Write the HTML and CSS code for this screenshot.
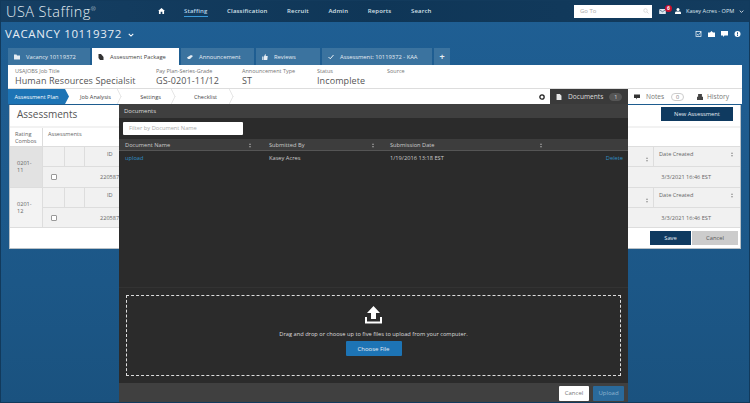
FILE: index.html
```html
<!DOCTYPE html>
<html>
<head>
  <meta charset="utf-8">
  <link rel="stylesheet" href="styles.css">
</head>
<body>
  <div class="topbar">
    <div class="logo">USA Staffing<sup>®</sup></div>
    <div class="nav">
      <svg class="nav-home" viewBox="0 0 16 14"><path d="M8 0 L16 7 L14 7 L14 14 L10 14 L10 9 L6 9 L6 14 L2 14 L2 7 L0 7 Z" fill="#fff"/></svg>
      <span class="nav-item active">Staffing</span>
      <span class="nav-item">Classification</span>
      <span class="nav-item">Recruit</span>
      <span class="nav-item">Admin</span>
      <span class="nav-item">Reports</span>
      <span class="nav-item">Search</span>
    </div>
    <div class="goto">
      <span>Go To</span>
      <svg viewBox="0 0 12 12"><circle cx="5" cy="5" r="3.5" fill="none" stroke="#ccc" stroke-width="1.3"/><path d="M8 8 L11 11" stroke="#ccc" stroke-width="1.5"/></svg>
    </div>
    <div class="mail">
      <svg viewBox="0 0 12 9"><rect width="12" height="9" rx="1" fill="#dfe7ee"/><path d="M0 1 L6 5 L12 1" fill="none" stroke="#123a5c"/></svg>
      <span class="mail-badge">6</span>
    </div>
    <div class="user">
      <svg viewBox="0 0 12 12"><circle cx="6" cy="3.2" r="3" fill="#fff"/><path d="M0 12 V9.5 Q0 7 3 7 H9 Q12 7 12 9.5 V12 Z" fill="#fff"/></svg>
      <span>Kasey Acres - OPM</span>
      <svg class="chev" viewBox="0 0 8 5"><path d="M1 1 L4 4 L7 1" fill="none" stroke="#fff" stroke-width="1.3"/></svg>
    </div>
  </div>

  <div class="vacancy-row">
    <div class="vacancy-title">VACANCY 10119372
      <svg viewBox="0 0 8 5"><path d="M1 1 L4 4 L7 1" fill="none" stroke="#fff" stroke-width="1.4"/></svg>
    </div>
    <div class="vacancy-icons">
      <svg viewBox="0 0 12 12"><rect x="1" y="1" width="10" height="10" fill="none" stroke="#fff" stroke-width="1.4"/><path d="M3 6 L5.5 8.5 L11 2" fill="none" stroke="#fff" stroke-width="1.4"/></svg>
      <svg viewBox="0 0 14 12"><path d="M0 3 H4 L7 0 L10 3 H14 V12 H0 Z" fill="#fff"/></svg>
      <svg viewBox="0 0 14 12"><path d="M0 0 H14 V9 H7 L4 12 V9 H0 Z" fill="#fff"/></svg>
      <svg viewBox="0 0 12 12"><circle cx="6" cy="6" r="6" fill="#fff"/><rect x="5" y="2.5" width="2" height="4.5" fill="#1d5a8e"/><rect x="5" y="8" width="2" height="2" fill="#1d5a8e"/></svg>
    </div>
  </div>

  <div class="tabs">
    <div class="tab tab-vacancy">
      <svg viewBox="0 0 12 10"><path d="M0 0 H5 L6 2 H12 V10 H0 Z" fill="#e6edf3"/></svg>Vacancy 10119372
    </div>
    <div class="tab tab-package active">
      <svg viewBox="0 0 10 12"><path d="M0 0 H5 L10 6 V12 H3 L0 8 Z" fill="#333"/></svg>Assessment Package
    </div>
    <div class="tab tab-announce">
      <svg viewBox="0 0 12 8"><path d="M0 5 L8 0 L12 2 L6 8 H2 Z" fill="#e6edf3"/></svg>Announcement
    </div>
    <div class="tab tab-reviews">
      <svg viewBox="0 0 11 12"><path d="M0 5 H2.5 V12 H0 Z M3.5 5 L6 0 L7 1 V4 H11 L10 12 H3.5 Z" fill="#e6edf3"/></svg>Reviews
    </div>
    <div class="tab tab-assess">
      <svg viewBox="0 0 12 10"><path d="M1 5 L4.5 8.5 L11 1" fill="none" stroke="#fff" stroke-width="1.8"/></svg>Assessment: 10119372 - KAA
    </div>
    <div class="tab tab-add">+</div>
  </div>

  <div class="info">
    <div class="info-col info-title"><label>USAJOBS Job Title</label><strong>Human Resources Specialsit</strong></div>
    <div class="info-col info-grade"><label>Pay Plan-Series-Grade</label><strong>GS-0201-11/12</strong></div>
    <div class="info-col info-type"><label>Announcement Type</label><strong>ST</strong></div>
    <div class="info-col info-status"><label>Status</label><strong>Incomplete</strong></div>
    <div class="info-col"><label>Source</label></div>
  </div>

  <div class="steps">
    <div class="step active">Assessment Plan</div>
    <div class="step step-job">Job Analysis</div>
    <div class="step step-settings">Settings</div>
    <div class="step step-check">Checklist</div>
    <div class="side-tabs">
      <div class="side-tab side-gear"><svg viewBox="0 0 10 10"><circle cx="5" cy="5" r="3.6" fill="none" stroke="#222" stroke-width="2.2"/></svg></div>
      <div class="side-tab side-docs">
        <svg viewBox="0 0 9 11"><path d="M0 0 H6 L9 3 V11 H0 Z" fill="#e8e8e8"/></svg>Documents<span class="count dark">1</span>
      </div>
      <div class="side-tab side-notes">
        <svg viewBox="0 0 12 10"><path d="M0 0 H12 V7 H6 L4 10 V7 H0 Z" fill="#333"/></svg>Notes<span class="count">0</span>
      </div>
      <div class="side-tab side-history">
        <svg viewBox="0 0 11 11"><path d="M2 0 H9 V5 H11 V11 H0 V5 H2 Z" fill="#444"/></svg>History
      </div>
    </div>
  </div>

  <div class="panel">
    <div class="panel-head">
      <h2>Assessments</h2>
      <button class="btn-new">New Assessment</button>
    </div>
    <div class="table-head">
      <div class="combo-head">Rating Combos</div>
      <div class="assess-head">Assessments</div>
    </div>
    <div class="combo-group shaded">
      <div class="combo-name">0201-<br>11</div>
      <div class="combo-rows">
        <div class="row-top">
          <div class="cell cell-a"></div><div class="cell cell-b"></div><div class="cell cell-id">ID</div>
          <div class="cell cell-fill"><span class="sort sort-mid"></span></div>
          <div class="cell cell-date">Date Created<span class="sort"></span></div>
        </div>
        <div class="row-data">
          <div class="cell-check"><span class="checkbox"></span></div><div class="cell-num">220587</div>
          <div class="cell-when">3/3/2021 16:46 EST</div>
        </div>
      </div>
    </div>
    <div class="combo-group">
      <div class="combo-name">0201-<br>12</div>
      <div class="combo-rows">
        <div class="row-top">
          <div class="cell cell-a"></div><div class="cell cell-b"></div><div class="cell cell-id">ID</div>
          <div class="cell cell-fill"><span class="sort sort-mid"></span></div>
          <div class="cell cell-date">Date Created<span class="sort"></span></div>
        </div>
        <div class="row-data">
          <div class="cell-check"><span class="checkbox"></span></div><div class="cell-num">220587</div>
          <div class="cell-when">3/3/2021 16:46 EST</div>
        </div>
      </div>
    </div>
    <div class="panel-foot">
      <button class="btn-save">Save</button>
      <button class="btn-cancel">Cancel</button>
    </div>
  </div>

  <div class="modal">
    <div class="modal-title">Documents</div>
    <div class="modal-filter"><div class="filter-input">Filter by Document Name</div></div>
    <div class="doc-head">
      <div class="doc-col doc-name">Document Name<span class="sort"></span></div>
      <div class="doc-col doc-by">Submitted By<span class="sort"></span></div>
      <div class="doc-col doc-date">Submission Date<span class="sort"></span></div>
    </div>
    <div class="doc-row">
      <div class="doc-col doc-name"><a>upload</a></div>
      <div class="doc-col doc-by">Kasey Acres</div>
      <div class="doc-col doc-date">1/19/2016 13:18 EST</div>
      <a class="doc-delete">Delete</a>
    </div>
    <div class="doc-spacer"></div>
    <div class="drop-wrap">
      <div class="drop">
        <svg class="drop-icon" viewBox="0 0 17 18"><path d="M8.5 0 L15 7 H11 V13 H6 V7 H2 Z" fill="#fff"/><path d="M1 11 V16.5 H16 V11" fill="none" stroke="#fff" stroke-width="2"/></svg>
        <div class="drop-text">Drag and drop or choose up to five files to upload from your computer.</div>
        <button class="btn-choose">Choose File</button>
      </div>
    </div>
    <div class="modal-foot">
      <button class="btn-modal-cancel">Cancel</button>
      <button class="btn-upload">Upload</button>
    </div>
  </div>
</body>
</html>
```

FILE: styles.css
```css
body {
  width: 750px;
  height: 403px;
  margin: 0;
  overflow: hidden;
  position: relative;
  font-family: "Open Sans", "Noto Sans", sans-serif;
  font-size: 6px;
  color: #555;
  background: linear-gradient(180deg, #1f5f94 0%, #1c5787 70%, #1a527f 100%);
}

/* thin dark frame round the whole shot */
body::after {
  content: "";
  position: absolute;
  inset: 0;
  border: 1px solid #123a5c;
  pointer-events: none;
}

button {
  font-family: inherit;
  border: none;
  padding: 0;
}

/* top bar */
.topbar {
  height: 22px;
  display: flex;
  align-items: center;
  background: linear-gradient(90deg, #153f63 0%, #0f3657 50%, #133c5f 100%);
  color: #fff;
  box-sizing: border-box;
}

.logo {
  width: 147px;
  padding: 0 0 0 6px;
  box-sizing: border-box;
  font-size: 14.5px;
  font-weight: 300;
  letter-spacing: 0.45px;
  color: #e4ecf2;
  white-space: nowrap;
}

.logo sup {
  font-size: 6px;
  vertical-align: 6px;
  line-height: 0;
}

.nav {
  width: 427px;
  display: flex;
  align-items: center;
  font-size: 6px;
  font-weight: 600;
  letter-spacing: 0.15px;
}

.nav-home {
  width: 7px;
  height: 6px;
  margin: 0 0 0 11px;
}

.nav-item {
  margin-left: 19.6px;
  color: #d5e0e9;
  padding: 2px 0 1px;
  border-bottom: 1px solid transparent;
  white-space: nowrap;
}

.nav-item.active {
  margin-left: 19px;
  border-bottom-color: #3a9ad9;
  color: #b9d6ea;
}

.goto {
  width: 78px;
  height: 13px;
  background: #fff;
  display: flex;
  align-items: center;
  justify-content: space-between;
  padding: 0 3px 0 6px;
  box-sizing: border-box;
  color: #aaa;
  font-size: 6px;
}

.goto svg {
  width: 6px;
  height: 6px;
}

.mail {
  position: relative;
  margin-left: 7px;
  width: 8px;
  height: 10px;
  display: flex;
  align-items: center;
}

.mail svg {
  width: 7px;
  height: 5px;
}

.mail-badge {
  position: absolute;
  left: 6px;
  top: -1px;
  width: 7px;
  height: 7px;
  border-radius: 50%;
  background: #c8102e;
  color: #fff;
  font-size: 5px;
  font-weight: 700;
  line-height: 7px;
  text-align: center;
}

.user {
  display: flex;
  align-items: center;
  margin-left: 8px;
  font-size: 5.6px;
  color: #dfe7ee;
  font-weight: 400;
  white-space: nowrap;
}

.user svg {
  width: 6px;
  height: 6px;
  margin-right: 5px;
}

.user .chev {
  width: 5px;
  height: 3px;
  margin: 0 0 0 5px;
}

/* vacancy title */
.vacancy-row {
  height: 26px;
  display: flex;
  align-items: center;
  justify-content: space-between;
  padding: 0 9px 3px 5px;
  box-sizing: border-box;
}

.vacancy-title {
  color: #e6edf3;
  font-size: 11.5px;
  letter-spacing: 0.65px;
}

.vacancy-title svg {
  width: 6px;
  height: 4px;
  margin-left: 2px;
  vertical-align: 1px;
}

.vacancy-icons {
  display: flex;
  align-items: center;
  gap: 6px;
}

.vacancy-icons svg {
  width: 7px;
  height: 6px;
}

/* tabs */
.tabs {
  height: 17px;
  display: flex;
  gap: 2px;
  margin-left: 8px;
}

.tab {
  display: flex;
  align-items: center;
  padding-left: 6px;
  box-sizing: border-box;
  background: #3b739f;
  color: #e6edf3;
  font-size: 5.8px;
  font-weight: 400;
  white-space: nowrap;
  overflow: hidden;
}

.tab svg {
  width: 6px;
  height: 6px;
  margin-right: 6px;
  flex: none;
}

.tab.active {
  background: #fff;
  color: #444;
}

.tab-vacancy { width: 82px; }
.tab-package { width: 87px; }
.tab-announce { width: 73px; }
.tab-reviews { width: 64px; }
.tab-assess { width: 110px; }
.tab-add {
  width: 16px;
  padding: 0;
  justify-content: center;
  font-size: 9px;
  font-weight: 700;
}

/* info strip */
.info {
  margin: 0 8px;
  height: 24px;
  background: #fff;
  display: flex;
  padding: 3px 0 0 7px;
  box-sizing: border-box;
  border-bottom: 1px solid #ddd;
}

.info-col {
  display: flex;
  flex-direction: column;
  white-space: nowrap;
}

.info-col label {
  font-size: 5.5px;
  line-height: 7px;
  color: #777;
}

.info-col strong {
  font-size: 9px;
  font-weight: 400;
  line-height: 12px;
  color: #555;
  letter-spacing: 0.1px;
}

.info-title { width: 141px; }
.info-grade { width: 86px; }
.info-type { width: 75px; }
.info-status { width: 70px; }

/* step row */
.steps {
  margin: 0 8px;
  height: 15px;
  background: #fff;
  display: flex;
  position: relative;
  font-size: 5.6px;
  color: #444;
}

.step {
  display: flex;
  align-items: center;
  justify-content: center;
  width: 55px;
  box-sizing: border-box;
  position: relative;
  overflow: hidden;
}

/* chevron divider between the steps */
.step::after {
  content: "";
  position: absolute;
  right: 2px;
  top: 2px;
  width: 10px;
  height: 10px;
  border-top: 1px solid #ddd;
  border-right: 1px solid #ddd;
  transform: scaleX(0.5) rotate(45deg);
}

.step.active {
  background: #1d74b5;
  color: #fff;
  width: 61px;
  padding-right: 4px;
  clip-path: polygon(0 0, calc(100% - 4px) 0, 100% 50%, calc(100% - 4px) 100%, 0 100%);
}

.step.active::after {
  display: none;
}

.step-job { width: 56px; padding-right: 3px; }
.step-settings { width: 54px; padding-right: 3px; }
.step-check { width: 58px; padding-right: 5px; }

.side-tabs {
  margin-left: auto;
  display: flex;
  height: 15px;
  margin-right: 3px;
  align-items: center;
  font-size: 6.6px;
  color: #777;
}

.side-tab {
  display: flex;
  align-items: center;
  height: 100%;
  box-sizing: border-box;
  white-space: nowrap;
}

.side-tab svg {
  width: 6px;
  height: 6px;
  margin-right: 6px;
  flex: none;
}

.side-gear {
  width: 17px;
  padding-left: 6px;
}

.side-docs {
  width: 78px;
  padding-left: 6px;
  background: #3a3a3a;
  color: #ddd;
}

.side-notes {
  width: 61px;
  padding-left: 6px;
}

.side-notes .count {
  margin-left: 7px;
}

.side-history {
  width: 50px;
  padding-left: 8px;
}

.side-history svg {
  margin-right: 4px;
}

.count {
  margin-left: 6px;
  width: 11px;
  height: 6px;
  border: 1px solid #ccc;
  border-radius: 4px;
  font-size: 5.5px;
  line-height: 6px;
  text-align: center;
}

.count.dark {
  background: #555;
  border-color: #555;
  color: #ddd;
}

/* assessments panel */
.panel {
  margin: 1px 9px 0;
  background: #fff;
  border: 1px solid #b8c0c6;
  border-top: none;
  box-sizing: border-box;
}

.panel-head {
  height: 23px;
  display: flex;
  align-items: center;
  justify-content: space-between;
  padding: 0 7px 3px;
  box-sizing: border-box;
  border-bottom: 2px solid #f2f2f2;
}

.panel-head h2 {
  margin: 0;
  font-size: 10px;
  font-weight: 400;
  color: #555;
}

.btn-new {
  width: 72px;
  height: 14px;
  background: #0f3a60;
  color: #e6edf3;
  font-size: 5.8px;
  font-weight: 400;
}

.table-head {
  height: 19px;
  display: flex;
  box-sizing: border-box;
  border-bottom: 1px solid #ddd;
  font-size: 5.6px;
  color: #666;
  line-height: 7px;
}

.combo-head {
  width: 33px;
  padding: 3px 0 0 5px;
  box-sizing: border-box;
  border-right: 1px solid #ddd;
}

.assess-head {
  padding: 3px 0 0 5px;
}

.combo-group {
  display: flex;
  height: 40px;
  box-sizing: border-box;
  border-bottom: 1px solid #ddd;
  font-size: 5.6px;
  color: #666;
}

.combo-group.shaded {
  height: 41px;
}

.combo-name {
  width: 33px;
  padding-left: 7px;
  box-sizing: border-box;
  display: flex;
  flex-direction: column;
  justify-content: center;
  background: #f3f3f3;
  border-right: 1px solid #ddd;
  line-height: 7px;
  flex: none;
}

.combo-group.shaded .combo-name {
  background: #e2e2e2;
}

.combo-rows {
  flex: 1;
  display: flex;
  flex-direction: column;
}

.row-top {
  height: 19px;
  display: flex;
  background: #f1f1f1;
  border-bottom: 1px solid #ddd;
}

.cell {
  border-right: 1px solid #ddd;
  padding: 3px 0 0 5px;
  box-sizing: border-box;
  position: relative;
}

.cell-a { width: 22px; }
.cell-b { width: 20px; }
.cell-id { width: 415px; padding-left: 22px; }
.cell-fill { width: 154px; }
.cell-date { flex: 1; border-right: none; }

/* up/down sort arrows */
.sort {
  position: absolute;
  right: 6px;
  top: 5px;
  width: 3px;
  height: 5px;
}

.sort::before,
.sort::after {
  content: "";
  position: absolute;
  left: 0;
  border-left: 1.5px solid transparent;
  border-right: 1.5px solid transparent;
}

.sort::before {
  top: 0;
  border-bottom: 2px solid #999;
}

.sort::after {
  bottom: 0;
  border-top: 2px solid #999;
}

.sort.sort-mid {
  top: 10px;
  right: 4px;
}

.row-data {
  flex: 1;
  display: flex;
  align-items: center;
  background: #f1f1f1;
}

.cell-check {
  width: 22px;
  display: flex;
  justify-content: center;
}

.checkbox {
  width: 4px;
  height: 4px;
  border: 1px solid #999;
  border-radius: 1px;
  background: #fff;
}

.cell-num {
  margin-left: 35px;
}

.cell-when {
  margin-left: auto;
  margin-right: 29px;
}

.panel-foot {
  height: 20px;
  display: flex;
  align-items: center;
  justify-content: flex-end;
  gap: 1px;
  padding-right: 2px;
}

.btn-save {
  width: 41px;
  height: 14px;
  background: #0f3a60;
  color: #e6edf3;
  font-size: 5.8px;
}

.btn-cancel {
  width: 46px;
  height: 14px;
  background: #ccc;
  color: #555;
  font-size: 5.8px;
}

/* documents modal */
.modal {
  position: absolute;
  left: 119px;
  top: 104px;
  width: 509px;
  height: 299px;
  background: #2b2b2b;
  display: flex;
  flex-direction: column;
  color: #ccc;
  font-size: 5.7px;
}

.modal-title {
  height: 14px;
  line-height: 14px;
  background: #3f3f3f;
  padding-left: 5px;
  color: #ddd;
  font-size: 6px;
}

.modal-filter {
  height: 21px;
  padding: 4px 0 0 4px;
  box-sizing: border-box;
}

.filter-input {
  width: 120px;
  height: 13px;
  line-height: 13px;
  background: #fff;
  padding-left: 6px;
  box-sizing: border-box;
  color: #aaa;
  border-radius: 1px;
}

.doc-head {
  height: 12px;
  display: flex;
  align-items: center;
  background: #3d3d3d;
  box-sizing: border-box;
  border-bottom: 1px solid #555;
}

.doc-col {
  position: relative;
  box-sizing: border-box;
  padding-left: 6px;
  white-space: nowrap;
}

.doc-name { width: 144px; }
.doc-by { width: 121px; }
.doc-date { width: 164px; }

.doc-head .sort {
  top: 2px;
  right: 5px;
}

.doc-head .doc-name .sort { right: 11px; }
.doc-head .doc-by .sort { right: 9px; }

.doc-row {
  height: 13px;
  display: flex;
  align-items: center;
}

.doc-row a {
  color: #2f8fc4;
}

.doc-delete {
  margin-left: auto;
  margin-right: 5px;
}

.doc-spacer {
  flex: 1;
  border-bottom: 1px solid #333;
}

.drop-wrap {
  height: 95px;
  padding: 7px;
  box-sizing: border-box;
}

.drop {
  height: 81px;
  border: 1px dashed #ddd;
  display: flex;
  flex-direction: column;
  align-items: center;
  box-sizing: border-box;
  padding-top: 10px;
}

.drop-icon {
  width: 17px;
  height: 18px;
}

.drop-text {
  margin-top: 6px;
  color: #ddd;
  font-size: 5.7px;
  line-height: 8px;
}

.btn-choose {
  margin-top: 3px;
  width: 56px;
  height: 15px;
  background: #1d74b5;
  border-radius: 1px;
  color: #e6edf3;
  font-size: 6px;
}

.modal-foot {
  height: 20px;
  background: #404040;
  display: flex;
  align-items: center;
  justify-content: flex-end;
  gap: 4px;
  padding-right: 4px;
}

.btn-modal-cancel {
  width: 30px;
  height: 15px;
  background: #fff;
  color: #777;
  font-size: 6px;
  border-radius: 1px;
}

.btn-upload {
  width: 31px;
  height: 15px;
  background: #2a6a9b;
  color: #8fb5d0;
  font-size: 6px;
  border-radius: 1px;
}
```
